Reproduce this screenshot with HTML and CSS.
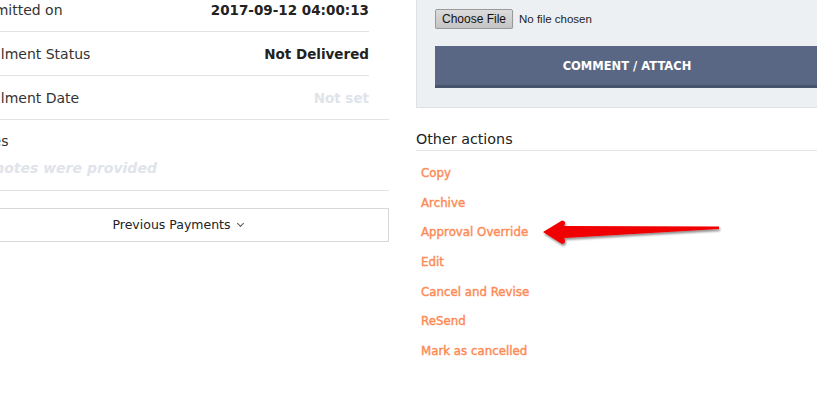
FILE: index.html
```html
<!DOCTYPE html>
<html lang="en">
<head>
  <meta charset="UTF-8" />
  <title>Purchase Order</title>
  <link rel="stylesheet" href="styles.css">
</head>
<body>
  <div class="page">
    <!-- Details column -->
    <div class="details">
      <div class="detail-row">
        <span class="detail-label">Submitted on</span>
        <span class="detail-value">2017-09-12 04:00:13</span>
      </div>
      <div class="detail-row">
        <span class="detail-label">Fulfillment Status</span>
        <span class="detail-value">Not Delivered</span>
      </div>
      <div class="detail-row detail-row-last">
        <span class="detail-label">Fulfillment Date</span>
        <span class="detail-value muted">Not set</span>
      </div>
      <div class="notes">
        <div class="detail-label">Notes</div>
        <div class="notes-empty">No notes were provided</div>
      </div>
      <button class="prev-payments">Previous Payments <span class="chevron"></span></button>
    </div>

    <!-- Sidebar -->
    <div class="sidebar">
      <div class="comment-box">
        <input type="file" class="file-input" />
        <button class="comment-btn">COMMENT / ATTACH</button>
      </div>

      <h3 class="actions-title">Other actions</h3>
      <ul class="actions">
        <li><a href="#">Copy</a></li>
        <li><a href="#">Archive</a></li>
        <li><a href="#">Approval Override</a></li>
        <li><a href="#">Edit</a></li>
        <li><a href="#">Cancel and Revise</a></li>
        <li><a href="#">ReSend</a></li>
        <li><a href="#">Mark as cancelled</a></li>
      </ul>
    </div>
  </div>

  <!-- annotation arrow -->
  <svg class="arrow" width="817" height="393" viewBox="0 0 817 393">
    <defs>
      <filter id="shadow" x="-10%" y="-50%" width="120%" height="200%">
        <feDropShadow dx="1" dy="2" stdDeviation="1.2" flood-color="#000" flood-opacity="0.45"/>
      </filter>
    </defs>
    <path d="M543 232 L562 220.5 Q567 221 564 226 L719 226.5 L719 229 L564 238 Q567 243 562 244 Z" fill="#f00000" filter="url(#shadow)"/>
  </svg>
</body>
</html>
```

FILE: styles.css
```css
body {
  margin: 0;
  font-family: "DejaVu Sans", "Noto Sans", sans-serif;
  color: #333;
  background: #fff;
  overflow: hidden;
  position: relative;
}

.page {
  display: flex;
  gap: 27px;
  margin-top: -12px;
}

/* left details */
.details {
  width: 423px;
  margin-left: -34px;
  flex: none;
}

.detail-row {
  display: flex;
  justify-content: space-between;
  align-items: center;
  height: 43px;
  margin-right: 20px;
  border-bottom: 1px solid #e2e2e2;
}

.detail-row-last {
  margin-right: 0;
  padding-right: 20px;
}

.detail-label {
  font-size: 14px;
  color: #333;
  padding-left: 2px;
}

.detail-value {
  font-size: 13.5px;
  font-weight: bold;
  color: #222;
}

.detail-value.muted {
  color: #dfe4ea;
}

.notes {
  height: 71px;
  border-bottom: 1px solid #e2e2e2;
  padding-top: 13px;
  box-sizing: border-box;
}

.notes-empty {
  margin-top: 11px;
  padding-left: 2px;
  font-size: 14px;
  font-style: italic;
  font-weight: bold;
  color: #dfe4ea;
}

.prev-payments {
  display: block;
  width: 423px;
  height: 34px;
  margin-top: 17px;
  background: #fff;
  border: 1px solid #d8d8d8;
  font-family: "DejaVu Sans", sans-serif;
  font-size: 12.5px;
  color: #222;
  padding: 0 0 2px;
}

.chevron {
  display: inline-block;
  width: 4px;
  height: 4px;
  border-right: 1px solid #555;
  border-bottom: 1px solid #555;
  transform: rotate(45deg);
  margin-left: 3px;
  position: relative;
  top: -3px;
}

/* sidebar */
.sidebar {
  width: 422px;
  flex: none;
}

.comment-box {
  background: #edf0f3;
  border-left: 1px solid #dde2e7;
  border-bottom: 1px solid #dde2e7;
  padding: 21px 19px 19px 18px;
  position: relative;
}

.comment-box::before {
  content: '';
  position: absolute;
  top: 11px;
  left: 18px;
  right: 0;
  height: 1px;
  background: #c8ccd1;
}

.file-input {
  display: block;
  font-family: "Liberation Sans", Arial, sans-serif;
  font-size: 11.5px;
  color: #222;
  height: 20px;
}

.file-input::file-selector-button {
  font-family: "Liberation Sans", Arial, sans-serif;
  font-size: 12px;
  color: #111;
  height: 20px;
  padding: 0 6px;
  margin-right: 6px;
  background: linear-gradient(#dcdcdc, #c4c4c4);
  border: 1px solid #9a9a9a;
  border-radius: 2px;
  box-shadow: 0 1px 1px rgba(0,0,0,0.25);
}

.comment-btn {
  display: block;
  width: 384px;
  height: 42px;
  margin-top: 17px;
  background: #5a6784;
  border: none;
  border-bottom: 3px solid #48536c;
  color: #fff;
  font-family: "DejaVu Sans", sans-serif;
  font-weight: bold;
  font-size: 11.5px;
  padding: 0;
}

.actions-title {
  margin: 23px 0 0;
  padding-bottom: 3px;
  font-size: 14.3px;
  font-weight: normal;
  color: #222;
  border-bottom: 1px solid #e3e4ea;
}

.actions {
  list-style: none;
  margin: 0;
  padding: 6px 0 0 5px;
}

.actions li {
  height: 29.7px;
  line-height: 29.7px;
}

.actions a {
  color: #fd8a55;
  text-decoration: none;
  font-size: 11.8px;
  font-weight: normal;
  -webkit-text-stroke: 0.4px #fd8a55;
}

.arrow {
  position: absolute;
  top: 0;
  left: 0;
  pointer-events: none;
}
```
